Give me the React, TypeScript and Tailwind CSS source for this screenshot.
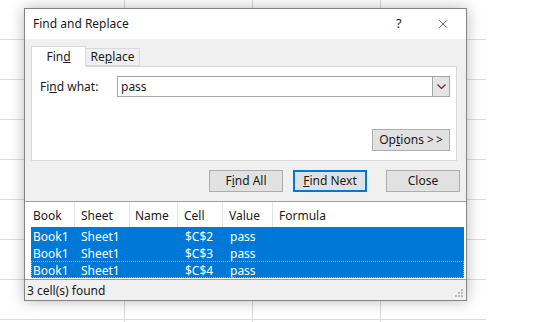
import { X } from "lucide-react";

const font = { fontFamily: '"Noto Sans", "Segoe UI", sans-serif' };

const rows = [
  { book: "Book1", sheet: "Sheet1", cell: "$C$2", value: "pass" },
  { book: "Book1", sheet: "Sheet1", cell: "$C$3", value: "pass" },
  { book: "Book1", sheet: "Sheet1", cell: "$C$4", value: "pass" },
];

const cols = [
  { label: "Book", w: "w-[44px] pl-[2px]" },
  { label: "Sheet", w: "w-[55px] pl-[6px]" },
  { label: "Name", w: "w-[48px] pl-[5px]" },
  { label: "Cell", w: "w-[45px] pl-[6px]" },
  { label: "Value", w: "w-[50px] pl-[6px]" },
];

const Btn = ({ children, w, focused }: { children: React.ReactNode; w: string; focused?: boolean }) => (
  <div
    className={`${w} h-[22px] flex items-center justify-center bg-[#e1e1e1] text-[12px] text-[#1a1a1a] ${
      focused ? "border-2 border-[#0078d7]" : "border border-[#adadad]"
    }`}
  >
    {children}
  </div>
);

export default function App() {
  return (
    <div className="relative w-[551px] h-[322px] bg-white overflow-hidden" style={font}>
      {/* spreadsheet grid behind the dialog */}
      <div className="absolute left-0 top-0 w-[486px] h-[322px] bg-[linear-gradient(to_right,#dcdcdc_1px,transparent_1px),linear-gradient(to_bottom,#dcdcdc_1px,transparent_1px)] bg-[size:128px_40px] bg-[position:124px_39px]" />

      <div className="absolute left-[24px] top-[8px] w-[443px] h-[293px] flex flex-col border border-[#858585] bg-[#f0f0f0] shadow-[0_0_14px_rgba(0,0,0,0.28)]">
        {/* title bar */}
        <div className="h-[30px] bg-white flex items-center pl-[8px] text-[12px] text-[#1a1a1a]">
          <span className="flex-1">Find and Replace</span>
          <span className="w-[10px] text-[13px] mr-[30px]">?</span>
          <X className="w-[14px] h-[14px] mr-[16px] text-[#222]" strokeWidth={1.2} />
        </div>

        {/* tabs */}
        <div className="pl-[6px] pt-[7px] flex items-end text-[12px] text-[#1a1a1a]">
          <div className="w-[55px] h-[21px] bg-white border border-b-0 border-[#d9d9d9] flex items-center justify-center relative z-10 -mb-px">
            Fin<u>d</u>
          </div>
          <div className="w-[54px] h-[18px] border border-l-0 border-[#d9d9d9] flex items-center justify-center">
            Re<u>p</u>lace
          </div>
        </div>

        {/* panel */}
        <div className="ml-[6px] w-[426px] h-[95px] bg-white border border-[#d9d9d9] flex flex-col text-[12px] text-[#1a1a1a]">
          <div className="flex items-center mt-[9px]">
            <span className="w-[85px] pl-[8px]">
              Fi<u>n</u>d what:
            </span>
            <div className="w-[333px] h-[21px] border border-[#a6a6a6] flex items-center">
              <span className="flex-1 pl-[3px]">pass</span>
              <div className="w-[17px] h-full bg-[#e5e5e5] border-l border-[#a6a6a6] flex items-center justify-center">
                <svg width="9" height="5" viewBox="0 0 9 5">
                  <polyline points="0.5,0.5 4.5,4.5 8.5,0.5" fill="none" stroke="#6b2150" strokeWidth="1.2" />
                </svg>
              </div>
            </div>
          </div>
          <div className="flex justify-end mt-[32px] pr-[6px]">
            <Btn w="w-[78px]">
              Op<u>t</u>ions &gt;<span className="w-[2px]" />&gt;
            </Btn>
          </div>
        </div>

        {/* action buttons */}
        <div className="flex justify-end pr-[6px] mt-[9px] gap-[10px]">
          <Btn w="w-[74px]">
            F<u>i</u>nd All
          </Btn>
          <Btn w="w-[74px]" focused>
            <u>F</u>ind Next
          </Btn>
          <div className="ml-[9px]">
            <Btn w="w-[74px]">Close</Btn>
          </div>
        </div>

        {/* results */}
        <div className="mt-[9px] bg-white border-t border-b border-[#a0a0a0] pl-[6px] pr-[2px] text-[12px]">
          <div className="h-[25px] flex items-center text-[#1a1a1a]">
            {cols.map((c) => (
              <div key={c.label} className={`${c.w} h-full flex items-center pt-[2px] border-r border-[#e5e5e5]`}>
                {c.label}
              </div>
            ))}
            <div className="pl-[6px] pt-[2px]">Formula</div>
          </div>
          {rows.map((r, i) => (
            <div
              key={r.cell}
              className={`h-[17px] flex items-center pt-[2px] bg-[#0078d7] text-white ${
                i === 2 ? "outline outline-1 outline-dotted outline-[#f0a040] -outline-offset-1" : ""
              }`}
            >
              <span className="w-[44px] pl-[2px]">{r.book}</span>
              <span className="w-[55px] pl-[6px]">{r.sheet}</span>
              <span className="w-[48px]" />
              <span className="w-[45px] pl-[7px]">{r.cell}</span>
              <span className="w-[50px] pl-[7px]">{r.value}</span>
            </div>
          ))}
          <div className="h-px" />
        </div>

        {/* status bar */}
        <div className="flex-1 flex items-center pl-[2px] pt-[2px] text-[12px] text-[#1a1a1a] relative">
          3 cell(s) found
          <svg className="absolute right-[2px] bottom-[2px]" width="10" height="10" viewBox="0 0 10 10">
            <g fill="#b8b8b8">
              <rect x="7" y="1" width="2" height="2" />
              <rect x="4" y="4" width="2" height="2" />
              <rect x="7" y="4" width="2" height="2" />
              <rect x="1" y="7" width="2" height="2" />
              <rect x="4" y="7" width="2" height="2" />
              <rect x="7" y="7" width="2" height="2" />
            </g>
          </svg>
        </div>
      </div>
    </div>
  );
}
